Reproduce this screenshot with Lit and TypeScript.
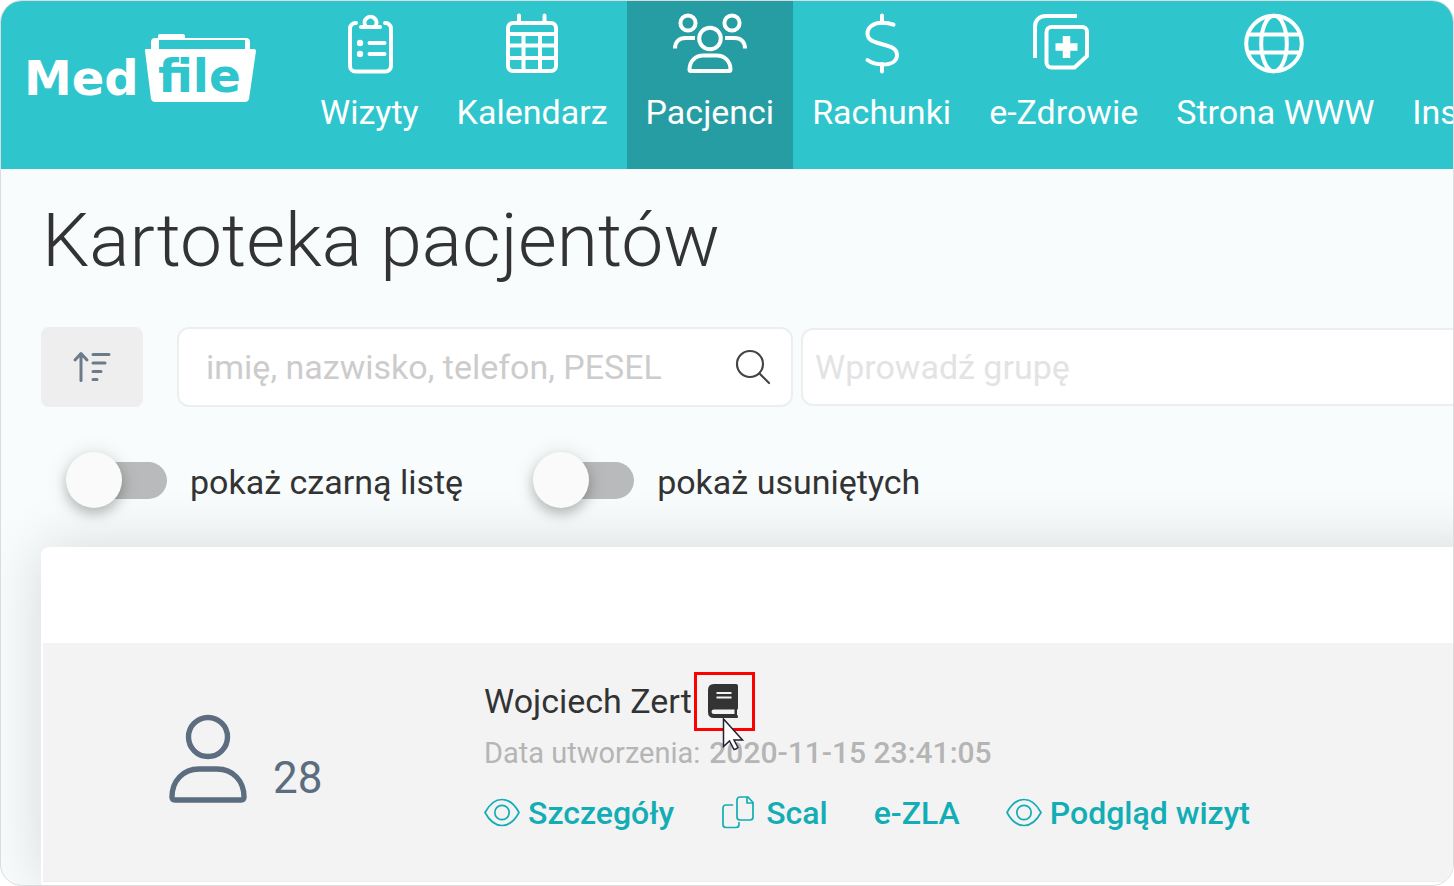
import { LitElement, html, css, svg, type TemplateResult } from "lit";
import { customElement, property, state } from "lit/decorators.js";
import { classMap } from "lit/directives/class-map.js";

interface NavItem {
  label: string;
  icon: TemplateResult | null;
  active?: boolean;
}

const clipboardIcon = svg`<svg width="80" height="64" viewBox="0 0 80 64" fill="none" stroke="currentColor" stroke-width="4" stroke-linecap="round" stroke-linejoin="round" aria-hidden="true">
  <path d="M27 12h-.5a5.500 5.500 0 0 0-5.500 5.500v37.500a5.500 5.500 0 0 0 5.500 5.500h30a5.500 5.500 0 0 0 5.500-5.500v-37.500A5.500 5.500 0 0 0 56.500 12H56"/>
  <path d="M32 16h19"/><path d="M36.500 15a6 6 0 1 1 10 0"/>
  <g fill="currentColor" stroke="none"><circle cx="31" cy="32" r="3.200"/><circle cx="31" cy="43" r="3.200"/></g>
  <path d="M40.500 32h15M40.500 43h15"/></svg>`;

const calendarIcon = svg`<svg width="80" height="64" viewBox="0 0 80 64" fill="none" stroke="currentColor" stroke-width="4" stroke-linecap="round" aria-hidden="true">
  <rect x="16" y="12" width="48" height="48" rx="5"/>
  <path d="M27 4.500V12M52.500 4.500V12M16 23h48M16 34.500h48M16 47h48M31.500 23V60M48 23V60"/></svg>`;

const peopleIcon = svg`<svg width="80" height="64" viewBox="0 0 80 64" fill="none" stroke="currentColor" stroke-width="4" stroke-linejoin="round" aria-hidden="true">
  <circle cx="18" cy="12" r="7.600"/><circle cx="62" cy="12" r="7.600"/><circle cx="40" cy="27.500" r="10.800"/>
  <path d="M5 37.500C5 30.500 9.500 27 15.500 27H25M55 27h9.500C70.500 27 75 30.500 75 37.500"/>
  <path d="M19.500 58.500c0-8.500 6-14 14-14h13c8 0 14 5.500 14 14 0 1-.5 1.500-1.500 1.500H21c-1 0-1.500-.5-1.500-1.500z"/></svg>`;

const dollarIcon = svg`<svg width="80" height="64" viewBox="0 0 80 64" fill="none" stroke="currentColor" stroke-width="4" stroke-linecap="round" aria-hidden="true">
  <path d="M40 4.500V12M40 53v7.500"/>
  <path d="M51.500 13.700c-3-1.200-7.500-1.900-11.500-1.900-8 0-14.500 4-14.500 10.700 0 14 29.500 7.500 29.500 21.500 0 6.500-6.500 9.500-14 9.500-5.500 0-11.500-1.500-15.500-4.500"/></svg>`;

const healthIcon = svg`<svg width="80" height="64" viewBox="0 0 80 64" fill="none" stroke="currentColor" stroke-width="4" stroke-linejoin="round" aria-hidden="true">
  <path d="M11 47V16C11 9 15 5 22.500 5H53"/>
  <path d="M27.500 16h31a4.500 4.500 0 0 1 4.500 4.500v24.500L50.500 56.500h-23a5 5 0 0 1-5-5v-30.500a5 5 0 0 1 5-5z"/>
  <path d="M42.500 25v22M31.500 36h22" stroke-width="7.500"/></svg>`;

const globeIcon = svg`<svg width="80" height="64" viewBox="0 0 80 64" fill="none" stroke="currentColor" stroke-width="4" aria-hidden="true">
  <circle cx="39" cy="32.500" r="27.800"/><ellipse cx="39" cy="32.500" rx="12.800" ry="27.800"/>
  <path d="M13 23.500h52M13 41.500h52"/></svg>`;

const eyeIcon = svg`<svg width="36" height="32" viewBox="0 0 36 32" fill="none" stroke="currentColor" stroke-width="1.700" stroke-linejoin="round" aria-hidden="true">
  <path d="M1 15.500C5 8 11 2.500 18 2.500S31 8 35 15.500C31 23 25 28.500 18 28.500S5 23 1 15.500z"/>
  <circle cx="18" cy="15.500" r="7.200"/></svg>`;

const copyIcon = svg`<svg width="38" height="34" viewBox="-2 0 38 34" fill="none" stroke="currentColor" stroke-width="1.700" stroke-linejoin="round" stroke-linecap="round" aria-hidden="true">
  <path d="M10.500 9H4a3 3 0 0 0-3 3v16.500a3 3 0 0 0 3 3h10a3 3 0 0 0 3-3v-2"/>
  <path d="M18 1h8l5 5.500V21a3 3 0 0 1-3 3h-10a3 3 0 0 1-3-3V4a3 3 0 0 1 3-3z"/>
  <path d="M25 1.500v5.500h5.500"/></svg>`;

const NAV: NavItem[] = [
  { label: "Wizyty", icon: clipboardIcon },
  { label: "Kalendarz", icon: calendarIcon },
  { label: "Pacjenci", icon: peopleIcon, active: true },
  { label: "Rachunki", icon: dollarIcon },
  { label: "e-Zdrowie", icon: healthIcon },
  { label: "Strona WWW", icon: globeIcon },
  { label: "Instrukcje", icon: null },
];

@customElement("app-toggle")
export class AppToggle extends LitElement {
  @property() label = "";
  @state() private on = false;

  static styles = css`
    :host { display: block; }
    .toggle { display: flex; align-items: center; gap: 23px; font-size: 34px; line-height: 40px; color: #333; cursor: pointer; white-space: nowrap; }
    .box { appearance: none; margin: 0; width: 101px; height: 56px; display: flex; align-items: center; position: relative; cursor: pointer; }
    .box::before { content: ""; flex: 1; height: 37px; margin-left: 14px; border-radius: 19px; background: #b9babb; }
    .box::after { content: ""; position: absolute; left: 0; top: 0; width: 56px; height: 56px; border-radius: 50%; background: #fafafa; box-shadow: 0 6px 12px rgba(0, 0, 0, 0.2), 0 2px 22px rgba(0, 0, 0, 0.12); transition: left 0.2s; }
    .box:checked::after { left: 45px; }
    .text { padding-top: 3px; }
  `;

  render() {
    return html`<label class="toggle">
      <input class="box" type="checkbox" .checked=${this.on}
        @change=${(e: Event) => (this.on = (e.target as HTMLInputElement).checked)} />
      <span class="text">${this.label}</span>
    </label>`;
  }
}

@customElement("app-root")
export class AppRoot extends LitElement {
  static styles = css`
    :host { display: block; font-family: Roboto, "Liberation Sans", sans-serif; color: #333; }
    * { box-sizing: border-box; }
    .frame { min-height: 100vh; display: flex; flex-direction: column; overflow: hidden; border: 1px solid #dadcdd; border-radius: 22px; background: #f8fcfd; }
    .top { display: flex; align-items: stretch; background: #2fc5cd; color: #fff; overflow: hidden; }
    .logo { flex: none; padding: 30px 44px 0 24px; color: inherit; }
    .logo svg, .item svg { display: block; }
    .logo-text { font-family: "DejaVu Sans", sans-serif; font-weight: 700; }
    .nav { display: flex; }
    .item { flex: none; display: flex; flex-direction: column; align-items: center; gap: 17px; padding: 10px 19px 37px; color: inherit; text-decoration: none; font-size: 34px; line-height: 40px; white-space: nowrap; }
    .item.active { background: #269da3; }
    .blank { height: 64px; }
    .main { flex: 1; display: flex; flex-direction: column; padding-left: 40px; }
    .title { margin: 0; padding: 25px 0 0 1px; font-size: 75px; line-height: 92px; font-weight: 300; }
    .filters { display: flex; align-items: center; padding-top: 41px; }
    .sort { flex: none; width: 102px; height: 80px; margin-right: 34px; border: 0; border-radius: 8px; background: #eee; color: #6b7b8a; display: grid; place-items: center; cursor: pointer; padding: 0; }
    .search { flex: 0 1 616px; min-width: 0; height: 80px; margin-right: 8px; display: flex; align-items: center; border: 2px solid #eceff1; border-radius: 12px; background: #fff; padding: 0 20px 0 27px; }
    .field { flex: 1; min-width: 0; border: 0; background: none; outline: none; padding: 0; font: inherit; font-size: 34px; line-height: 40px; color: #333; }
    .field::placeholder { color: #ccc; opacity: 1; }
    .group { flex: 1; min-width: 0; height: 78px; display: flex; align-items: center; border: 2px solid #eceff1; border-right: 0; border-radius: 12px 0 0 12px; background: #fff; padding-left: 12px; }
    .group .field::placeholder { color: #e3e3e3; }
    .icon-button { flex: none; border: 0; background: none; padding: 0; color: #444; display: grid; cursor: pointer; }
    .toggles { display: flex; gap: 70px; padding: 45px 0 39px 25px; }
    .card { flex: 1; padding: 96px 0 3px 2px; margin-right: -60px; background: #fff; border-radius: 8px 0 0 0; box-shadow: 0 0 60px rgba(0, 0, 0, 0.14); }
    .patient { display: grid; grid-template-columns: 441px 1fr; background: #f3f3f3; padding: 32px 0 46px; border-bottom: 1px solid #eee; }
    .who { display: flex; align-items: flex-end; gap: 26px; padding: 0 0 31px 126px; color: #5b6d7e; font-size: 44px; line-height: 52px; }
    .who svg { display: block; }
    .details { display: flex; flex-direction: column; min-width: 0; }
    .name { display: flex; align-items: center; font-size: 34px; line-height: 52px; margin: 0; font-weight: 400; white-space: nowrap; }
    .card-link { position: relative; display: grid; margin-left: 15px; color: #333; }
    .mark { position: absolute; left: -13px; top: -12px; width: 61px; height: 59px; border: 3px solid #f00; }
    .pointer { position: absolute; left: 14px; top: 33px; }
    .created { display: flex; gap: 9px; margin: 0; font-size: 29px; line-height: 52px; color: #b5b5b5; white-space: nowrap; }
    .created time { font-size: 30px; font-weight: 500; }
    .actions { display: flex; gap: 46px; padding-top: 12px; }
    .action { display: flex; align-items: center; gap: 8px; height: 44px; color: #12adb5; font-size: 32px; line-height: 44px; font-weight: 500; text-decoration: none; white-space: nowrap; }
  `;

  private renderLogo() {
    return html`<a class="logo" href="#" aria-label="MedFile">
      <svg width="232" height="84" viewBox="0 0 232 84">
        <text class="logo-text" x="-1" y="64" font-size="48" fill="#fff">Med</text>
        <g fill="#fff">
          <path d="M126 19v-8q0-4 4-4h3V5q0-2 2-2h23q2 0 2 2v2h61q4 0 4 4v8h-5v-10h-86v10z"/>
          <path d="M122 18h107q2 0 2 2l-7 48q-1 3-4 3h-90q-3 0-4-3l-6-48q-1-2 2-2z"/>
        </g>
        <text class="logo-text" x="133" y="61" font-size="47" fill="#2fc5cd">file</text>
      </svg></a>`;
  }

  render() {
    return html`<div class="frame">
      <header class="top">
        ${this.renderLogo()}
        <nav class="nav">
          ${NAV.map((n) => html`<a href="#" class=${classMap({ item: true, active: !!n.active })}>
            ${n.icon ?? html`<span class="blank"></span>`}<span>${n.label}</span></a>`)}
        </nav>
      </header>
      <main class="main">
        <h1 class="title">Kartoteka pacjentów</h1>
        <div class="filters">
          <button class="sort" type="button" aria-label="Sortuj">
            <svg width="40" height="32" viewBox="0 0 40 32" fill="none" stroke="currentColor" stroke-width="3" stroke-linecap="round" stroke-linejoin="round">
              <path d="M9 29.500V3M3 9l6-6.500L15 9"/>
              <path d="M21 3.500h16M21 12h12M21 20.500h8M21 28.500h4"/></svg>
          </button>
          <div class="search">
            <input class="field" type="text" aria-label="Szukaj pacjenta" placeholder="imię, nazwisko, telefon, PESEL" />
            <button class="icon-button" type="button" aria-label="Szukaj">
              <svg width="36" height="36" viewBox="0 0 36 36" fill="none" stroke="currentColor" stroke-width="2.200" stroke-linecap="round">
                <circle cx="15" cy="15" r="13"/><path d="M24.500 24.500L34 34"/></svg>
            </button>
          </div>
          <div class="group">
            <input class="field" type="text" aria-label="Grupa" placeholder="Wprowadź grupę" />
          </div>
        </div>
        <div class="toggles">
          <app-toggle label="pokaż czarną listę"></app-toggle>
          <app-toggle label="pokaż usuniętych"></app-toggle>
        </div>
        <section class="card">
          <article class="patient">
            <div class="who">
              <svg width="78" height="90" viewBox="0 0 78 90" fill="none" stroke="currentColor" stroke-width="5.400" stroke-linejoin="round" aria-hidden="true">
                <circle cx="39" cy="23" r="19.500"/>
                <path d="M3 83C3 67 14 55 30 55h18c16 0 27 12 27 28 0 2-1 3-3 3H6c-2 0-3-1-3-3z"/></svg>
              <span>28</span>
            </div>
            <div class="details">
              <h2 class="name">Wojciech Zert
                <a class="card-link" href="#" aria-label="Karta pacjenta">
                  <svg width="32" height="34" viewBox="0 0 32 34" aria-hidden="true">
                    <path fill="currentColor" d="M7 0h22q2 0 2 2v22q0 1-1 2v5q1 0 1 2 0 1-1 1H7q-6 0-6-6V6q0-6 6-6z"/>
                    <path fill="#f3f3f3" d="M7 25.500h20.500v4.500H7q-2.500 0-2.500-2.250T7 25.500z"/>
                    <path stroke="#f3f3f3" stroke-width="2" d="M9.500 9h15M9.500 13.500h15"/></svg>
                  <span class="mark"></span>
                  <svg class="pointer" width="24" height="36" viewBox="0 0 24 36" aria-hidden="true">
                    <path fill="#fff" stroke="#223" stroke-width="1.500" d="M2.500 2v27.500l6-5.500 4.500 8.500q2 0 4-2l-4-7.500h8.500z"/></svg>
                </a>
              </h2>
              <p class="created"><span>Data utworzenia:</span> <time datetime="2020-11-15T23:41:05">2020-11-15 23:41:05</time></p>
              <div class="actions">
                <a class="action" href="#">${eyeIcon}Szczegóły</a>
                <a class="action" href="#">${copyIcon}Scal</a>
                <a class="action" href="#">e-ZLA</a>
                <a class="action" href="#">${eyeIcon}Podgląd wizyt</a>
              </div>
            </div>
          </article>
        </section>
      </main>
    </div>`;
  }
}
